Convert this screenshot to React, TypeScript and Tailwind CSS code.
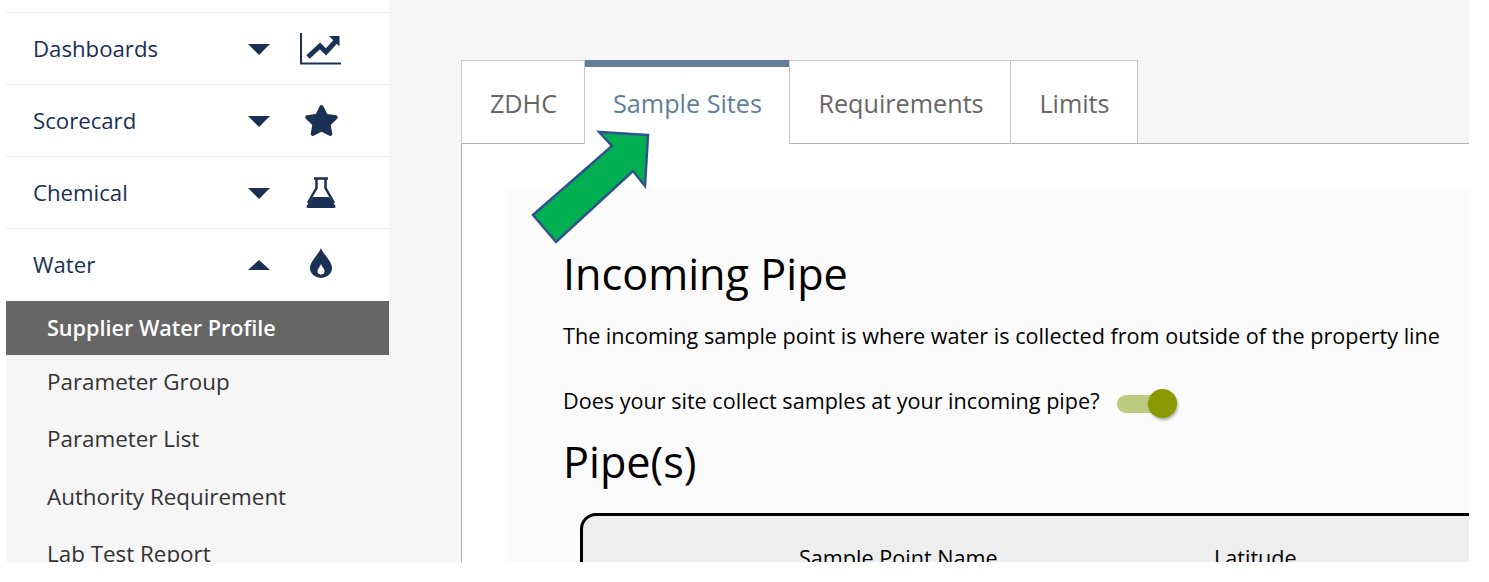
import { FaStar } from "react-icons/fa";

const navy = "#1a3054";

const Caret = ({ up = false }: { up?: boolean }) => (
  <svg width="22" height="12" viewBox="0 0 22 12" className="shrink-0" fill={navy}>
    {up ? <path d="M11 1 L22 11 L0 11 Z" /> : <path d="M0 1 L22 1 L11 12 Z" />}
  </svg>
);

const ChartIcon = () => (
  <svg width="41" height="32" viewBox="0 0 41 32" fill="none" className="-ml-[2px]">
    <path d="M1 0 V30.5 H41" stroke={navy} strokeWidth="2" />
    <path d="M8 24 L20 13 L26 19 L36 8" stroke={navy} strokeWidth="5" />
    <path d="M29 3 H39.5 V13.5 Z" fill={navy} />
  </svg>
);

const FlaskIcon = () => (
  <svg width="30" height="32" viewBox="0 0 30 32" fill="none">
    <path d="M8 1.5 H22" stroke={navy} strokeWidth="2.5" />
    <path d="M10.5 2 V11 L2 26 M19.5 2 V11 L28 26" stroke={navy} strokeWidth="2.5" />
    <path d="M7 20 H23 L29.5 29 Q30 31 28 31 H2 Q0 31 0.5 29 Z" fill={navy} />
  </svg>
);

const DropIcon = () => (
  <svg width="22" height="30" viewBox="0 0 22 30" className="mb-[3px]">
    <path
      fillRule="evenodd"
      fill={navy}
      d="M11 0 C13 6 22 13 22 20 A11 10 0 0 1 0 20 C0 13 9 6 11 0 Z M11 16 C10 19 7.5 20.5 7.5 23 A3.5 3.5 0 0 0 14.5 23 C14.5 20.5 12 19 11 16 Z"
    />
  </svg>
);

const menu = [
  { label: "Dashboards", icon: <ChartIcon /> },
  { label: "Scorecard", icon: <FaStar size={35} color={navy} /> },
  { label: "Chemical", icon: <FlaskIcon /> },
  { label: "Water", icon: <DropIcon />, open: true },
];

const subItems = ["Parameter Group", "Parameter List", "Authority Requirement", "Lab Test Report"];

const tabs = [
  { label: "ZDHC", width: "w-[124px] pl-px" },
  { label: "Sample Sites", width: "w-[204px] pl-px", active: true },
  { label: "Requirements", width: "w-[222px] pl-[2px]" },
  { label: "Limits", width: "w-[128px] -ml-px pl-px" },
];

export default function App() {
  return (
    <div className="relative h-[582px] w-[1489px] overflow-hidden bg-white font-['Open_Sans',sans-serif]">
      <div className="ml-[6px] flex h-[562px] w-[1463px] overflow-hidden bg-[#f6f6f6]">
        <aside className="w-[383px] shrink-0">
          <div className="bg-white pt-3">
            {menu.map((item) => (
              <div
                key={item.label}
                className="flex h-[72px] items-center border-t border-[#eeeeee] pl-[27px] text-[22.2px] text-[#1a3054]"
              >
                <span className="flex-1">{item.label}</span>
                <Caret up={item.open} />
                <span className="ml-[30px] mr-[47px] flex w-[42px] justify-center">{item.icon}</span>
              </div>
            ))}
            <div className="h-px" />
          </div>
          <div className="flex h-[54px] items-center bg-[#666666] pl-[41px] text-[21.6px] font-semibold text-white">
            Supplier Water Profile
          </div>
          <div className="-mt-[2px]">
            {subItems.map((item) => (
              <div
                key={item}
                className="flex h-[57.5px] items-center pl-[41px] text-[22.4px] font-medium text-[#333333]"
              >
                {item}
              </div>
            ))}
          </div>
        </aside>

        <main className="min-w-0 flex-1 pl-[72px] pt-[60px]">
          <div className="flex h-[84px] text-[25.2px] text-[#666666]">
            {tabs.map((tab) =>
              tab.active ? (
                <div
                  key={tab.label}
                  className={`flex h-[84px] items-center justify-center border-t-[7px] border-[#5f7f9b] bg-white pb-[3px] text-[#5f7f9b] ${tab.width}`}
                >
                  {tab.label}
                </div>
              ) : (
                <div
                  key={tab.label}
                  className={`flex h-[84px] items-center justify-center border border-[#c8c8c8] border-b-[#b0b0b0] bg-white pt-[4px] ${tab.width}`}
                >
                  {tab.label}
                </div>
              )
            )}
          </div>
          <div className="-mt-px h-[500px] border-l border-t border-[#b0b0b0] bg-white pl-[45px] pt-[45px]">
            <div className="h-[400px] bg-[#fbfbfb] pl-[56px] pt-[55px] text-black">
              <h1 className="text-[43.2px] leading-[60px]">Incoming Pipe</h1>
              <p className="mt-[17px] text-[21.6px] leading-[30px]">
                The incoming sample point is where water is collected from outside of the property line
              </p>
              <div className="mt-[35px] flex h-[30px] items-center text-[21.6px]">
                <span>Does your site collect samples at your incoming pipe?</span>
                <div className="relative ml-[18px] mt-[6px] h-[18px] w-[43px] rounded-full bg-[#bccb7f]">
                  <div className="absolute -top-[6px] left-[31px] h-[29px] w-[29px] rounded-full bg-[#889a00] shadow-[1px_2px_3px_rgba(0,0,0,0.3)]" />
                </div>
              </div>
              <h2 className="mt-[16px] text-[43.2px] leading-[60px]">Pipe(s)</h2>
              <div className="ml-[17px] mt-[21px] h-[120px] rounded-tl-[16px] border-l-[3px] border-t-[3px] border-black bg-[#eeeeee] pt-[26px] text-[21.6px]">
                <div className="flex">
                  <span className="ml-[216px] w-[415px]">Sample Point Name</span>
                  <span>Latitude</span>
                </div>
              </div>
            </div>
          </div>
        </main>
      </div>

      <svg width="130" height="120" viewBox="0 0 130 120" className="absolute left-[525px] top-[128px]">
        <path
          d="M123 7 L74 4 L87 18 L8 87 L31 114 L108 43 L120 58 Z"
          fill="#00b050"
          stroke="#2f528f"
          strokeWidth="2.5"
        />
      </svg>
    </div>
  );
}
